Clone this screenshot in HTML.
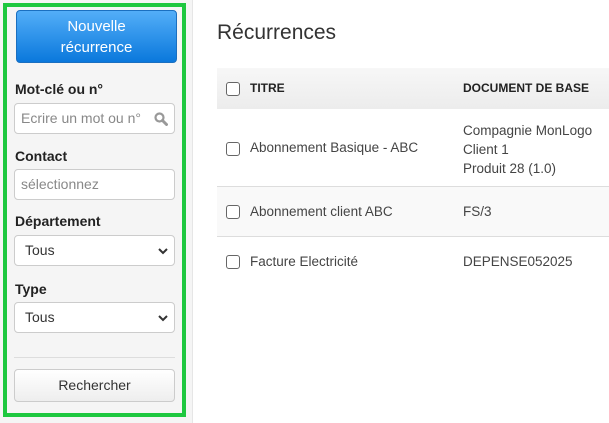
<!DOCTYPE html><html><head><style>
body{margin:0;width:609px;height:423px;overflow:hidden;font-family:"Liberation Sans",sans-serif;background:#fff;position:relative;font-size:14px;color:#333}
.side{position:absolute;left:0;top:0;width:192px;height:423px;background:#f5f5f5;border-right:1px solid #e6e6e6}
.green{position:absolute;left:3px;top:3px;width:175px;height:406px;border:4px solid #1ec840}
.btn{position:absolute;left:16px;top:10px;width:161px;height:53px;border:1px solid #1a6fc0;border-radius:4px;background:linear-gradient(#53aef8,#0a78dc);color:#fff;text-align:center;font-size:15px;line-height:21px;padding-top:5px;box-sizing:border-box}
.lbl{position:absolute;left:15px;font-weight:bold;font-size:14px;color:#222}
.inp{position:absolute;left:14px;width:161px;height:31px;border:1px solid #ccc;border-radius:4px;background:#fff;box-sizing:border-box;color:#888;font-size:14px;line-height:29px;padding-left:6px}
.sel{color:#333;padding-left:10px}
.chev{position:absolute;right:5px;top:9px}
.hr{position:absolute;left:14px;width:161px;top:357px;border-top:1px solid #ddd}
.rb{position:absolute;left:14px;top:369px;width:161px;height:33px;border:1px solid #ccc;border-radius:4px;background:linear-gradient(#fff,#eee);box-sizing:border-box;text-align:center;line-height:31px;color:#333}
h1{position:absolute;left:217px;top:21px;margin:0;font-weight:normal;font-size:21px;color:#333}
.hd{position:absolute;left:217px;top:68px;width:392px;height:41px;background:linear-gradient(#f7f7f7,#ececec)}
.cb{position:absolute;width:12px;height:12px;border:1px solid #666;border-radius:3px;background:#fff}
.t{position:absolute;font-size:13.5px;color:#444}
.line{position:absolute;left:217px;width:392px;border-top:1px solid #ddd}
</style></head><body>
<div class="side"></div>
<div class="green"></div>
<div class="btn">Nouvelle<br>récurrence</div>
<div class="lbl" style="top:81px">Mot-clé ou n°</div>
<div class="inp" style="top:103px">Ecrire un mot ou n°<svg style="position:absolute;right:6px;top:8px" width="14" height="14" viewBox="0 0 14 14"><circle cx="5.5" cy="5.5" r="4" fill="none" stroke="#999" stroke-width="2.2"/><line x1="8.5" y1="8.5" x2="12.5" y2="12.5" stroke="#999" stroke-width="3" stroke-linecap="round"/></svg></div>
<div class="lbl" style="top:148px">Contact</div>
<div class="inp" style="top:169px">sélectionnez</div>
<div class="lbl" style="top:213px">Département</div>
<div class="inp sel" style="top:235px">Tous<svg class="chev" width="12" height="12" viewBox="0 0 12 12"><path d="M2 4l4 4 4-4" fill="none" stroke="#333" stroke-width="2"/></svg></div>
<div class="lbl" style="top:281px">Type</div>
<div class="inp sel" style="top:302px">Tous<svg class="chev" width="12" height="12" viewBox="0 0 12 12"><path d="M2 4l4 4 4-4" fill="none" stroke="#333" stroke-width="2"/></svg></div>
<div class="hr"></div>
<div class="rb">Rechercher</div>
<h1>Récurrences</h1>
<div class="hd"></div>
<div class="cb" style="left:226px;top:82px"></div>
<div class="t" style="left:250px;top:81px;font-weight:bold;font-size:12px;color:#222">TITRE</div>
<div class="t" style="left:463px;top:81px;font-weight:bold;font-size:12px;color:#222">DOCUMENT DE BASE</div>
<div class="cb" style="left:226px;top:142px"></div>
<div class="t" style="left:250px;top:140px">Abonnement Basique - ABC</div>
<div class="t" style="left:463px;top:121px;line-height:19px">Compagnie MonLogo<br>Client 1<br>Produit 28 (1.0)</div>
<div class="line" style="top:186px"></div>
<div style="position:absolute;left:217px;top:187px;width:392px;height:49px;background:#f9f9f9"></div>
<div class="cb" style="left:226px;top:205px"></div>
<div class="t" style="left:250px;top:204px">Abonnement client ABC</div>
<div class="t" style="left:463px;top:204px">FS/3</div>
<div class="line" style="top:236px"></div>
<div class="cb" style="left:226px;top:255px"></div>
<div class="t" style="left:250px;top:254px">Facture Electricité</div>
<div class="t" style="left:463px;top:254px">DEPENSE052025</div>
</body></html>
